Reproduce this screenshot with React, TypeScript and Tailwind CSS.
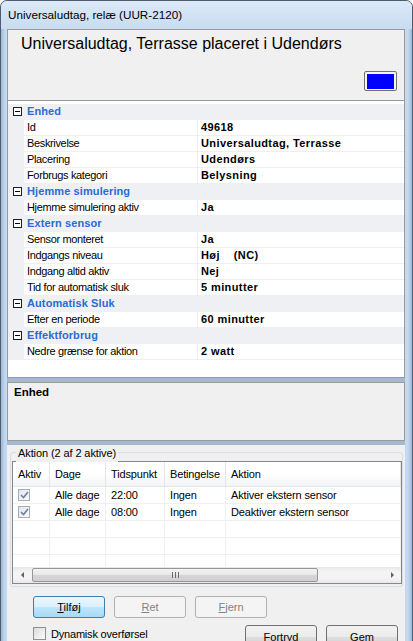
import React from 'react';

type Row = [string, string];
interface Section {
  title: string;
  rows: Row[];
}

const sections: Section[] = [
  {
    title: 'Enhed',
    rows: [
      ['Id', '49618'],
      ['Beskrivelse', 'Universaludtag, Terrasse'],
      ['Placering', 'Udendørs'],
      ['Forbrugs kategori', 'Belysning'],
    ],
  },
  { title: 'Hjemme simulering', rows: [['Hjemme simulering aktiv', 'Ja']] },
  {
    title: 'Extern sensor',
    rows: [
      ['Sensor monteret', 'Ja'],
      ['Indgangs niveau', 'Høj    (NC)'],
      ['Indgang altid aktiv', 'Nej'],
      ['Tid for automatisk sluk', '5 minutter'],
    ],
  },
  { title: 'Automatisk Sluk', rows: [['Efter en periode', '60 minutter']] },
  { title: 'Effektforbrug', rows: [['Nedre grænse for aktion', '2 watt']] },
];

const actions = [
  { dage: 'Alle dage', tid: '22:00', bet: 'Ingen', aktion: 'Aktiver ekstern sensor' },
  { dage: 'Alle dage', tid: '08:00', bet: 'Ingen', aktion: 'Deaktiver ekstern sensor' },
];

const cols = ['w-[37px]', 'w-[56px]', 'w-[59px]', 'w-[61px]', 'flex-1'];

const MinusBox = () => (
  <div className="w-[9px] h-[9px] border border-[#1e1e1e] bg-white flex items-center justify-center">
    <div className="w-[5px] h-[1px] bg-black" />
  </div>
);

const ListCheck = () => (
  <div className="w-[12px] h-[12px] border border-[#a8adb5] bg-gradient-to-br from-[#e3e7ee] to-[#f8f9fb] flex items-center justify-center">
    <svg width="9" height="8" viewBox="0 0 9 8">
      <path d="M1 4 L3.5 6.5 L8 1" stroke="#6c7fa3" strokeWidth="1.6" fill="none" />
    </svg>
  </div>
);

const Button: React.FC<{ u: string; rest: string; disabled?: boolean; focus?: boolean; cls?: string }> = ({
  u,
  rest,
  disabled,
  focus,
  cls = '',
}) => {
  const base = disabled
    ? 'border-[#adb2b5] bg-[#f4f4f4] text-[#838383]'
    : focus
      ? 'border-[#3c7fb1] bg-[linear-gradient(#eaf6fd_0%,#d9f0fc_50%,#bee6fd_50%,#a7d9f5_100%)] text-black'
      : 'border-[#707070] bg-[linear-gradient(#f2f2f2_0%,#ebebeb_50%,#dddddd_50%,#cfcfcf_100%)] text-black';
  return (
    <div className={`w-[72px] flex items-center justify-center rounded-[3px] border text-[11px] ${base} ${cls}`}>
      <span>
        <span className="underline">{u}</span>
        {rest}
      </span>
    </div>
  );
};

export default function App() {
  return (
    <div className="w-[413px] h-[641px] overflow-hidden bg-[#f4f4f4]" style={{ fontFamily: '"Liberation Sans", Arial, sans-serif' }}>
      <div className="w-[413px] h-[660px] rounded-t-[7px] border border-[#4f5c6b] bg-[linear-gradient(90deg,#9db8da_0px,#c4d8ef_4px,#c4d8ef_calc(100%-4px),#9db8da_100%)] flex flex-col">
        {/* Title bar */}
        <div className="h-[28px] flex items-center pl-[7px] rounded-t-[6px] bg-[linear-gradient(#dce9f7,#c8dbf0)] text-[11.7px] text-black">
          Universaludtag, relæ (UUR-2120)
        </div>

        {/* Client */}
        <div className="ml-[6px] mr-[7px] flex flex-col">
          {/* Header panel */}
          <div className="h-[72px] border border-[#9a9a9a] bg-[#f0f0f0] relative">
            <div className="pl-[13px] pt-[2px] text-[16px] text-black">
              Universaludtag, Terrasse placeret i Udendørs
            </div>
            <div className="absolute left-[356px] top-[41px] w-[33px] h-[20px] rounded-[2px] border border-[#707070] bg-[#f4f4f4] flex items-center justify-center">
              <div className="w-[27px] h-[15px] bg-[#0000ff]" />
            </div>
          </div>

          {/* Property grid */}
          <div className="h-[277px] border-x border-b border-[#9a9a9a] bg-white flex flex-col pt-[3px]">
            <div className="flex flex-col">
              {sections.map(s => (
                <React.Fragment key={s.title}>
                  <div className="h-[16px] flex items-center bg-[#eef0f4] border-b border-[#eef0f4]">
                    <div className="w-[16px] flex justify-center pl-[2px]">
                      <MinusBox />
                    </div>
                    <div className="pl-[3px] text-[11px] font-bold text-[#2a6bd3] tracking-[0.1px]">{s.title}</div>
                  </div>
                  {s.rows.map(r => (
                    <div key={r[0]} className="h-[16px] flex">
                      <div className="w-[16px] bg-[#eef0f4]" />
                      <div className="w-[174px] pl-[3px] flex items-center text-[11px] tracking-[-0.35px] border-b border-r border-[#efefef] text-black">
                        {r[0]}
                      </div>
                      <div className="flex-1 pl-[3px] flex items-center text-[11px] font-bold tracking-[0.4px] whitespace-pre border-b border-[#efefef] text-black">
                        {r[1]}
                      </div>
                    </div>
                  ))}
                </React.Fragment>
              ))}
            </div>
          </div>

          {/* Splitter */}
          <div className="h-[4px] bg-[#a3b8d1]" />

          {/* Description */}
          <div className="h-[59px] border border-[#9a9a9a] bg-[#f0f0f0] pl-[6px] pt-[1px] text-[11.5px] font-bold text-black">
            Enhed
          </div>

          {/* Splitter */}
          <div className="h-[4px] bg-[#a3b8d1]" />

          {/* Bottom area */}
          <div className="h-[200px] bg-[#f0f0f0] flex flex-col">
            {/* Group box */}
            <div className="mt-[7px] ml-[3px] w-[393px] h-[135px] shrink-0 border border-[#d5dfe5] rounded-[3px] relative pt-[8px] pl-[1px]">
              <div className="absolute left-[5px] top-[-8px] px-[2px] bg-[#f0f0f0] text-[11px] text-black tracking-[-0.1px]">
                Aktion (2 af 2 aktive)
              </div>
              <div className="w-[390px] h-[123px] border border-[#828790] bg-white flex flex-col overflow-hidden">
                {/* Header */}
                <div className="h-[25px] shrink-0 flex bg-[linear-gradient(#ffffff_0%,#ffffff_50%,#f3f4f6_100%)] border-b border-[#e5e5e5] text-[11px] text-black tracking-[-0.15px]">
                  {['Aktiv', 'Dage', 'Tidspunkt', 'Betingelse', 'Aktion'].map((h, i) => (
                    <div key={h} className={`${cols[i]} flex items-center pl-[5px] border-r border-[#e5e5e5]`}>
                      {h}
                    </div>
                  ))}
                </div>
                {/* Rows */}
                {[0, 1, 2, 3].map(i => {
                  const a = actions[i];
                  return (
                    <div key={i} className="h-[17px] shrink-0 flex border-b border-[#f0f0f0] text-[11px] text-black tracking-[-0.15px]">
                      <div className={`${cols[0]} flex items-center pl-[5px] border-r border-[#f0f0f0]`}>{a ? <ListCheck /> : null}</div>
                      <div className={`${cols[1]} flex items-center pl-[5px] border-r border-[#f0f0f0]`}>{a?.dage}</div>
                      <div className={`${cols[2]} flex items-center pl-[5px] border-r border-[#f0f0f0]`}>{a?.tid}</div>
                      <div className={`${cols[3]} flex items-center pl-[5px] border-r border-[#f0f0f0]`}>{a?.bet}</div>
                      <div className={`${cols[4]} flex items-center pl-[5px] border-r border-[#f0f0f0]`}>{a?.aktion}</div>
                    </div>
                  );
                })}
                <div className="flex-1 flex">
                  {cols.map((c, i) => (
                    <div key={i} className={`${c} border-r border-[#f0f0f0]`} />
                  ))}
                </div>
                {/* Horizontal scrollbar */}
                <div className="h-[16px] shrink-0 flex items-center bg-[linear-gradient(#e8e8e8,#f4f4f4_30%,#f4f4f4_70%,#e8e8e8)]">
                  <div className="w-[19px] flex justify-center">
                    <div className="w-0 h-0 border-y-[3px] border-y-transparent border-r-[3px] border-r-[#606060]" />
                  </div>
                  <div className="w-[286px] h-[14px] rounded-[2px] border border-[#979797] bg-[linear-gradient(#f3f3f3,#e8e8e8_50%,#d6d6d6_50%,#cfcfcf)] flex items-center justify-center gap-[2px]">
                    <div className="w-[1px] h-[6px] bg-[#6e6e6e]" />
                    <div className="w-[1px] h-[6px] bg-[#6e6e6e]" />
                    <div className="w-[1px] h-[6px] bg-[#6e6e6e]" />
                  </div>
                  <div className="flex-1" />
                  <div className="w-[17px] flex justify-center">
                    <div className="w-0 h-0 border-y-[3px] border-y-transparent border-l-[3px] border-l-[#606060]" />
                  </div>
                </div>
              </div>
            </div>

            {/* Action buttons */}
            <div className="mt-[9px] ml-[26px] flex gap-[9px] h-[22px] shrink-0">
              <Button u="T" rest="ilføj" focus />
              <Button u="R" rest="et" disabled />
              <Button u="F" rest="jern" disabled />
            </div>

            {/* Bottom row */}
            <div className="mt-[7px] flex items-start h-[24px] shrink-0">
              <div className="ml-[26px] mt-[2px] w-[13px] h-[13px] border border-[#8e8f8f] bg-[linear-gradient(135deg,#dcdcdc,#fbfbfb)]" />
              <div className="ml-[5px] mt-[1px] text-[11px] text-black tracking-[-0.2px]">Dynamisk overførsel</div>
              <div className="flex-1" />
              <div className="flex gap-[9px] mr-[7px] h-[24px]">
                <Button u="" rest="Fortryd" cls="w-[71px]" />
                <Button u="" rest="Gem" />
              </div>
            </div>
          </div>
        </div>
      </div>
    </div>
  );
}
